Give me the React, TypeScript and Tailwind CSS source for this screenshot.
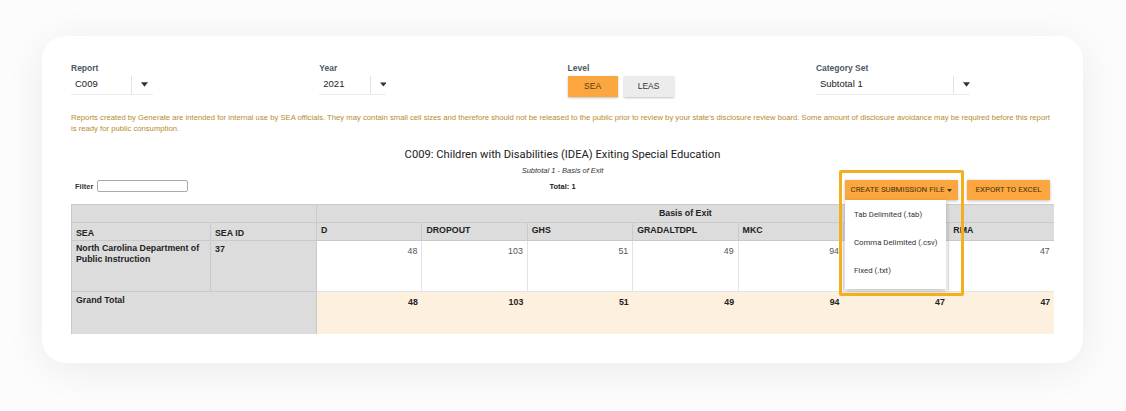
import React from 'react';

const cols = ['D', 'DROPOUT', 'GHS', 'GRADALTDPL', 'MKC', 'NOREC', 'RMA'];
const rowVals = [48, 103, 51, 49, 94, 47, 47];

function Caret({ className = '' }: { className?: string }) {
  return (
    <svg viewBox="0 0 8 5" className={className} fill="currentColor">
      <path d="M0 0h8L4 5z" />
    </svg>
  );
}

function SelectBox({ value, width, valueWidth }: { value: string; width: string; valueWidth: string }) {
  return (
    <div className={`flex items-center h-[20px] border-b border-[#ececec] ${width}`}>
      <span className={`pl-[4px] text-[9.5px] text-[#222] ${valueWidth}`}>{value}</span>
      <span className="h-[18px] w-px bg-[#e2e2e2]" />
      <Caret className="w-[7px] h-[5px] ml-[9px] text-[#333]" />
    </div>
  );
}

function Field({ label, children }: { label: string; children: React.ReactNode }) {
  return (
    <div className="w-[248.3px] shrink-0 flex flex-col gap-[2px]">
      <span className="text-[8.5px] leading-[10px] font-semibold text-[#4d5963]">{label}</span>
      {children}
    </div>
  );
}

export default function App() {
  return (
    <div className="w-[1126px] h-[411px] bg-[#fcfcfc] pt-[36px] pl-[42px] font-['Liberation_Sans',Arial,sans-serif]">
      <div className="w-[1041px] h-[327px] rounded-[24px] bg-white shadow-[0_6px_40px_rgba(0,0,0,0.07)] pl-[29px] pr-[29px] pt-[27px]">
        {/* Filters */}
        <div className="flex">
          <Field label="Report">
            <SelectBox value="C009" width="w-[82px]" valueWidth="w-[60px]" />
          </Field>
          <Field label="Year">
            <SelectBox value="2021" width="w-[67px]" valueWidth="w-[52px]" />
          </Field>
          <Field label="Level">
            <div className="flex gap-[6px] mt-[1px]">
              <button className="w-[50px] h-[21px] bg-[#fba63f] text-[8.5px] text-[#5a3c10] shadow-[0_1px_2px_rgba(0,0,0,0.25)]">SEA</button>
              <button className="w-[50px] h-[21px] bg-[#ececec] text-[8.5px] text-[#333] shadow-[0_1px_2px_rgba(0,0,0,0.25)]">LEAS</button>
            </div>
          </Field>
          <Field label="Category Set">
            <SelectBox value="Subtotal 1" width="w-[154px]" valueWidth="w-[137px]" />
          </Field>
        </div>

        <p className="mt-[15px] text-[7.7px] leading-[11px] text-[#b58d2c]">
          Reports created by Generate are intended for internal use by SEA officials. They may contain small cell sizes and therefore should not be released to the public prior to review by your state's disclosure review board. Some amount of disclosure avoidance may be required before this report is ready for public consumption.
        </p>

        <div className="mt-[14px] text-center text-[11.2px] leading-[14px] text-[#222] font-['Roboto',sans-serif]">
          C009: Children with Disabilities (IDEA) Exiting Special Education
        </div>
        <div className="mt-[3px] text-center text-[7.5px] italic text-[#333]">Subtotal 1 - Basis of Exit</div>

        <div className="relative flex items-end h-[21px]">
          <div className="w-[220px] flex items-center gap-[4px] pl-[4px] pb-[5px]">
            <span className="text-[7.5px] font-bold text-[#333]">Filter</span>
            <input className="w-[91px] h-[12px] border border-[#aaa] rounded-[2px] bg-white" />
          </div>
          <div className="absolute left-0 right-0 top-[5px] text-center text-[7.5px] font-bold text-[#222]">Total: 1</div>
          <div className="ml-auto mr-[4px] mb-[-3px] flex gap-[9px] font-['Roboto',sans-serif]">
            <div className="relative">
              <button className="relative z-20 h-[20px] w-[113px] bg-[#fba63f] text-[7.9px] text-[#4a3210] shadow-[0_1px_3px_rgba(0,0,0,0.25)] flex items-center justify-center gap-[3px]">
                CREATE SUBMISSION FILE
                <Caret className="w-[5px] h-[3px]" />
              </button>
              <div className="absolute z-20 left-0 top-[20px] w-[101px] h-[89px] bg-white shadow-[0_2px_5px_rgba(0,0,0,0.25)] flex flex-col justify-around pb-[4px] pl-[9px] text-[7.8px] text-[#333]">
                <span>Tab Delimited (.tab)</span>
                <span>Comma Delimited (.csv)</span>
                <span>Fixed (.txt)</span>
              </div>
              <div className="absolute z-30 -left-[6px] -top-[10px] w-[125px] h-[126px] border-[3px] border-[#f2b01e] rounded-[2px] pointer-events-none" />
            </div>
            <button className="h-[20px] w-[83px] bg-[#fba63f] text-[7.9px] text-[#4a3210] shadow-[0_1px_3px_rgba(0,0,0,0.25)]">
              EXPORT TO EXCEL
            </button>
          </div>
        </div>

        {/* Table */}
        <div className="mt-[7px] h-[130px] overflow-hidden">
          <table className="table-fixed border-collapse w-[983px] text-[8.8px] text-[#222]">
            <colgroup>
              <col className="w-[139px]" />
              <col className="w-[106px]" />
              {cols.map((c) => (
                <col key={c} className="w-[105.4px]" />
              ))}
            </colgroup>
            <thead>
              <tr className="h-[18px]">
                <th colSpan={2} className="bg-[#dcdcdc] border border-[#cacaca]" />
                <th colSpan={7} className="bg-[#dcdcdc] border border-[#cacaca] font-bold text-center">Basis of Exit</th>
              </tr>
              <tr className="h-[18px]">
                <th className="bg-[#dcdcdc] border border-[#cacaca] text-left pl-[4px] pt-[3px]">SEA</th>
                <th className="bg-[#dcdcdc] border border-[#cacaca] text-left pl-[4px] pt-[3px]">SEA ID</th>
                {cols.map((c) => (
                  <th key={c} className="bg-[#dcdcdc] border border-[#cacaca] text-left align-top pl-[4px] pt-[1px]">
                    {c === 'NOREC' ? '' : c}
                  </th>
                ))}
              </tr>
            </thead>
            <tbody>
              <tr className="h-[51px]">
                <td className="bg-[#dcdcdc] border border-[#cacaca] align-top font-bold pl-[4px] pt-[2px] leading-[11px]">
                  North Carolina Department of Public Instruction
                </td>
                <td className="bg-[#dcdcdc] border border-[#cacaca] align-top font-bold pl-[4px] pt-[2px]">37</td>
                {rowVals.map((v, i) => (
                  <td key={i} className="bg-white border border-[#e3e3e3] align-top text-right pr-[4px] pt-[4px] text-[#555]">{v}</td>
                ))}
              </tr>
              <tr className="h-[60px]">
                <td colSpan={2} className="bg-[#dcdcdc] border border-[#cacaca] align-top font-bold pl-[4px] pt-[2px]">Grand Total</td>
                {rowVals.map((v, i) => (
                  <td key={i} className="bg-[#fdf0df] align-top text-right pr-[4px] pt-[4px] font-bold">{v}</td>
                ))}
              </tr>
            </tbody>
          </table>
        </div>
      </div>
    </div>
  );
}
